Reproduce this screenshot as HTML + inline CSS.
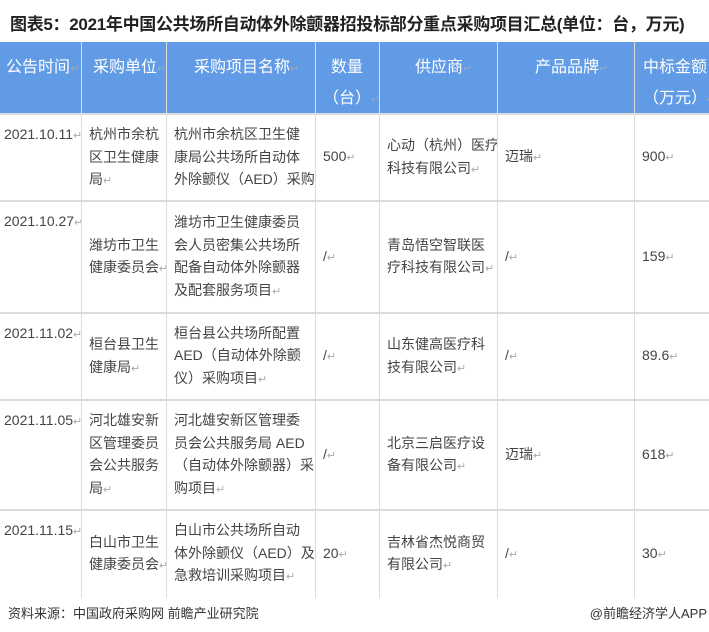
<!DOCTYPE html>
<html><head><meta charset="utf-8">
<style>
*{margin:0;padding:0;box-sizing:border-box}
body{width:709px;height:632px;background:#fff;position:relative;overflow:hidden;font-family:"Liberation Sans","Noto Sans CJK SC",sans-serif;color:#444}
.t{position:absolute;left:10px;top:10px;font-size:17px;font-weight:bold;color:#222;letter-spacing:-0.3px;white-space:nowrap}
.c{position:absolute;font-size:14px;line-height:22.5px;display:flex;align-items:center;padding:0 2px 0 8px;white-space:nowrap;overflow:hidden}
.h{background:#619be6;color:#fff;display:block;padding-top:10px;font-size:16px;line-height:31px}
.top{align-items:flex-start;padding-top:9px;padding-left:4px}
.vl{position:absolute;width:1px;background:#dcdcdc;top:42px;height:556px}
.hl{position:absolute;left:0;width:709px;height:1.5px;background:#dcdcdc}
.r{color:#aaa;font-size:11px}
.h .r{color:#9ab}
.f{position:absolute;top:603px;font-size:13px;color:#333;white-space:nowrap}
</style></head><body>
<div class="t">图表5：2021年中国公共场所自动体外除颤器招投标部分重点采购项目汇总(单位：台，万元)</div>

<div class="c h" style="left:0;top:42px;width:81px;height:72px;padding-left:6px">公告时间<span class="r">↵</span></div>
<div class="c h" style="left:81px;top:42px;width:85px;height:72px;padding-left:12px">采购单位<span class="r">↵</span></div>
<div class="c h" style="left:166px;top:42px;width:149px;height:72px;padding-left:28px">采购项目名称<span class="r">↵</span></div>
<div class="c h" style="left:315px;top:42px;width:64px;height:72px;padding-left:16px">数量<br><span style="margin-left:-8px">（台）</span><span class="r">↵</span></div>
<div class="c h" style="left:379px;top:42px;width:118px;height:72px;padding-left:36px">供应商<span class="r">↵</span></div>
<div class="c h" style="left:497px;top:42px;width:137px;height:72px;padding-left:38px">产品品牌<span class="r">↵</span></div>
<div class="c h" style="left:634px;top:42px;width:75px;height:72px;padding-left:9px">中标金额<br>（万元）<span class="r">↵</span></div>

<div class="c top" style="left:0;top:114px;width:81px;height:87px"><div>2021.10.11<span class="r">↵</span></div></div>
<div class="c" style="left:81px;top:114px;width:85px;height:87px;align-items:flex-start;padding-top:9px"><div>杭州市余杭<br>区卫生健康<br>局<span class="r">↵</span></div></div>
<div class="c" style="left:166px;top:114px;width:149px;height:87px;align-items:flex-start;padding-top:9px"><div>杭州市余杭区卫生健<br>康局公共场所自动体<br>外除颤仪（AED）采购<span class="r">↵</span></div></div>
<div class="c" style="left:315px;top:114px;width:64px;height:87px"><div>500<span class="r">↵</span></div></div>
<div class="c" style="left:379px;top:114px;width:118px;height:87px"><div>心动（杭州）医疗<br>科技有限公司<span class="r">↵</span></div></div>
<div class="c" style="left:497px;top:114px;width:137px;height:87px"><div>迈瑞<span class="r">↵</span></div></div>
<div class="c" style="left:634px;top:114px;width:75px;height:87px"><div>900<span class="r">↵</span></div></div>

<div class="c top" style="left:0;top:201px;width:81px;height:112px"><div>2021.10.27<span class="r">↵</span></div></div>
<div class="c" style="left:81px;top:201px;width:85px;height:112px"><div>潍坊市卫生<br>健康委员会<span class="r">↵</span></div></div>
<div class="c" style="left:166px;top:201px;width:149px;height:112px"><div>潍坊市卫生健康委员<br>会人员密集公共场所<br>配备自动体外除颤器<br>及配套服务项目<span class="r">↵</span></div></div>
<div class="c" style="left:315px;top:201px;width:64px;height:112px"><div>/<span class="r">↵</span></div></div>
<div class="c" style="left:379px;top:201px;width:118px;height:112px"><div>青岛悟空智联医<br>疗科技有限公司<span class="r">↵</span></div></div>
<div class="c" style="left:497px;top:201px;width:137px;height:112px"><div>/<span class="r">↵</span></div></div>
<div class="c" style="left:634px;top:201px;width:75px;height:112px"><div>159<span class="r">↵</span></div></div>

<div class="c top" style="left:0;top:313px;width:81px;height:87px"><div>2021.11.02<span class="r">↵</span></div></div>
<div class="c" style="left:81px;top:313px;width:85px;height:87px"><div>桓台县卫生<br>健康局<span class="r">↵</span></div></div>
<div class="c" style="left:166px;top:313px;width:149px;height:87px"><div>桓台县公共场所配置<br>AED（自动体外除颤<br>仪）采购项目<span class="r">↵</span></div></div>
<div class="c" style="left:315px;top:313px;width:64px;height:87px"><div>/<span class="r">↵</span></div></div>
<div class="c" style="left:379px;top:313px;width:118px;height:87px"><div>山东健高医疗科<br>技有限公司<span class="r">↵</span></div></div>
<div class="c" style="left:497px;top:313px;width:137px;height:87px"><div>/<span class="r">↵</span></div></div>
<div class="c" style="left:634px;top:313px;width:75px;height:87px"><div>89.6<span class="r">↵</span></div></div>

<div class="c top" style="left:0;top:400px;width:81px;height:110px"><div>2021.11.05<span class="r">↵</span></div></div>
<div class="c" style="left:81px;top:400px;width:85px;height:110px;align-items:flex-start;padding-top:9px"><div>河北雄安新<br>区管理委员<br>会公共服务<br>局<span class="r">↵</span></div></div>
<div class="c" style="left:166px;top:400px;width:149px;height:110px;align-items:flex-start;padding-top:9px"><div>河北雄安新区管理委<br>员会公共服务局 AED<br>（自动体外除颤器）采<br>购项目<span class="r">↵</span></div></div>
<div class="c" style="left:315px;top:400px;width:64px;height:110px"><div>/<span class="r">↵</span></div></div>
<div class="c" style="left:379px;top:400px;width:118px;height:110px"><div>北京三启医疗设<br>备有限公司<span class="r">↵</span></div></div>
<div class="c" style="left:497px;top:400px;width:137px;height:110px"><div>迈瑞<span class="r">↵</span></div></div>
<div class="c" style="left:634px;top:400px;width:75px;height:110px"><div>618<span class="r">↵</span></div></div>

<div class="c top" style="left:0;top:510px;width:81px;height:88px"><div>2021.11.15<span class="r">↵</span></div></div>
<div class="c" style="left:81px;top:510px;width:85px;height:88px"><div>白山市卫生<br>健康委员会<span class="r">↵</span></div></div>
<div class="c" style="left:166px;top:510px;width:149px;height:88px"><div>白山市公共场所自动<br>体外除颤仪（AED）及<br>急救培训采购项目<span class="r">↵</span></div></div>
<div class="c" style="left:315px;top:510px;width:64px;height:88px"><div>20<span class="r">↵</span></div></div>
<div class="c" style="left:379px;top:510px;width:118px;height:88px"><div>吉林省杰悦商贸<br>有限公司<span class="r">↵</span></div></div>
<div class="c" style="left:497px;top:510px;width:137px;height:88px"><div>/<span class="r">↵</span></div></div>
<div class="c" style="left:634px;top:510px;width:75px;height:88px"><div>30<span class="r">↵</span></div></div>

<div class="vl" style="left:81px"></div>
<div class="vl" style="left:166px"></div>
<div class="vl" style="left:315px"></div>
<div class="vl" style="left:379px"></div>
<div class="vl" style="left:497px"></div>
<div class="vl" style="left:634px"></div>
<div class="hl" style="top:113px"></div>
<div class="hl" style="top:200px"></div>
<div class="hl" style="top:312px"></div>
<div class="hl" style="top:399px"></div>
<div class="hl" style="top:509px"></div>

<div class="f" style="left:8px">资料来源：中国政府采购网 前瞻产业研究院</div>
<div class="f" style="right:2px">@前瞻经济学人APP</div>
</body></html>
